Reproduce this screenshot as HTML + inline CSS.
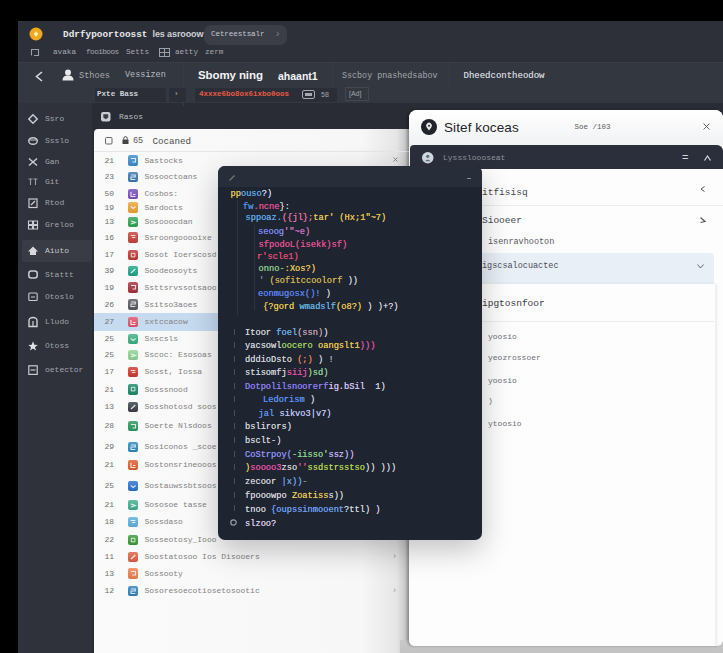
<!DOCTYPE html><html><head><meta charset="utf-8"><style>
*{margin:0;padding:0;box-sizing:border-box}
html,body{width:723px;height:653px;overflow:hidden;background:#000}
body{position:relative;font-family:"Liberation Sans",sans-serif}
.a{position:absolute}
.t{position:absolute;white-space:pre;line-height:1}
.mono{font-family:"Liberation Mono",monospace}
svg{position:absolute;overflow:visible}
</style></head><body>
<div class="a" style="left:18px;top:21px;width:705px;height:632px;background:#2a2d35"></div>
<div class="a" style="left:18px;top:21px;width:705px;height:41px;background:#2d3039"></div>
<div class="a" style="left:18px;top:62px;width:705px;height:41px;background:#33373f"></div>
<div class="a" style="left:18px;top:62px;width:705px;height:1px;background:#393d46"></div>
<div class="a" style="left:18px;top:103px;width:74px;height:550px;background:#2f323b"></div>
<div class="a" style="left:92px;top:103px;width:631px;height:550px;background:#292c34"></div>
<svg style="left:29px;top:27px;" width="14" height="14" viewBox="0 0 14 14"><circle cx="7" cy="7" r="6.5" fill="#f0a81e"/><path d="M7 4.2L9.3 7L7 9.8L4.7 7z" fill="#fff0c8"/></svg>
<div class="t mono" style="left:63px;top:29.5px;font-size:9.4px;color:#e8e9ec;font-weight:bold">Ddrfypoortoosst</div>
<div class="t " style="left:152.5px;top:30px;font-size:9px;color:#d0d2d6;font-weight:bold;letter-spacing:-0.1px">les asrooow</div>
<div class="a" style="left:204px;top:25px;width:83px;height:19.5px;background:#3b3e46;border-radius:7px"></div>
<div class="t mono" style="left:211px;top:30.5px;font-size:7.6px;color:#c5c8ce;letter-spacing:-0.1px">Cetreestsalr</div>
<div class="t " style="left:276px;top:29px;font-size:10px;color:#80848b;">›</div>
<svg style="left:31px;top:49px;" width="8" height="7" viewBox="0 0 8 7"><path d="M0.5 6.5V0.5H7.5V6.5H3" fill="none" stroke="#9aa0a8" stroke-width="1.1"/></svg>
<div class="t mono" style="left:53px;top:49px;font-size:7.7px;color:#a4a8af;">avaka</div>
<div class="t mono" style="left:86px;top:49px;font-size:7.7px;color:#a4a8af;letter-spacing:-0.55px">fooiboos</div>
<div class="t mono" style="left:126px;top:49px;font-size:7.7px;color:#a4a8af;">Setts</div>
<svg style="left:159px;top:48px;" width="11" height="9" viewBox="0 0 11 9"><rect x="0.5" y="0.5" width="10" height="8" fill="none" stroke="#9aa0a8"/><path d="M0.5 4.5h10M5.5 0.5v8" stroke="#9aa0a8"/></svg>
<div class="t mono" style="left:175px;top:49px;font-size:7.7px;color:#a4a8af;">aetty</div>
<div class="t mono" style="left:205px;top:49px;font-size:7.7px;color:#a4a8af;">zerm</div>
<svg style="left:35px;top:71px;" width="8" height="11" viewBox="0 0 8 11"><path d="M7 1L1.5 5.5L7 10" stroke="#d6d8dc" stroke-width="1.6" fill="none"/></svg>
<svg style="left:62px;top:69px;" width="12" height="12" viewBox="0 0 12 12"><circle cx="6" cy="3.5" r="3" fill="#e6e8eb"/><path d="M0.5 11.5c0-4 2.5-5 5.5-5s5.5 1 5.5 5z" fill="#e6e8eb"/></svg>
<div class="t mono" style="left:79px;top:72px;font-size:8.6px;color:#a7abb2;">Sthoes</div>
<div class="t mono" style="left:125px;top:71px;font-size:8.5px;color:#b9bdc3;">Vessizen</div>
<div class="a" style="left:183px;top:62px;width:1px;height:44px;background:#393c44"></div>
<div class="t " style="left:198px;top:70px;font-size:11.5px;color:#f2f3f5;font-weight:bold;letter-spacing:-0.1px">Sbomy ning</div>
<div class="t " style="left:278px;top:71px;font-size:10.5px;color:#f2f3f5;font-weight:bold">ahaant1</div>
<div class="a" style="left:332px;top:62px;width:1px;height:26px;background:#393c44"></div>
<div class="t mono" style="left:342px;top:72px;font-size:8.4px;color:#a3a7ae;">Sscboy pnashedsabov</div>
<div class="a" style="left:449px;top:62px;width:1px;height:26px;background:#393c44"></div>
<div class="t mono" style="left:463.5px;top:71.5px;font-size:9px;color:#c8cbd1;text-shadow:0 0 0.4px #c8cbd1">Dheedcontheodow</div>
<div class="a" style="left:94px;top:87px;width:73px;height:16px;background:#2b2e37;border:1px solid #353840"></div>
<div class="t mono" style="left:97px;top:91px;font-size:7.6px;color:#cfd2d8;font-weight:bold">Pxte Bass</div>
<div class="a" style="left:168px;top:87px;width:19px;height:16px;background:#2b2e37;border:1px solid #353840"></div>
<div class="t " style="left:175px;top:90px;font-size:8px;color:#b0b3b9;">›</div>
<div class="a" style="left:194px;top:87px;width:144px;height:16px;background:#2b2e37;border:1px solid #353840"></div>
<div class="t mono" style="left:199px;top:91px;font-size:7.5px;color:#e85a44;font-weight:bold">4xxxe6bo8ox6ixbo0oos</div>
<svg style="left:302px;top:90px;" width="13" height="9" viewBox="0 0 13 9"><rect x="0.5" y="0.5" width="12" height="8" rx="1.5" fill="none" stroke="#a6aab0"/><rect x="3" y="3" width="7" height="3" fill="#a6aab0"/></svg>
<div class="t " style="left:321px;top:91px;font-size:7px;color:#a0a4aa;">58</div>
<div class="a" style="left:345px;top:87px;width:24px;height:14px;border:1px solid #44474f"></div>
<div class="t " style="left:349px;top:90px;font-size:7px;color:#a0a4aa;">[Ad]</div>
<div class="a" style="left:21.5px;top:240px;width:70px;height:22px;background:#393c44;border-radius:2px"></div>
<svg style="left:28px;top:114px;" width="10" height="10" viewBox="0 0 10 10"><path d="M5 0.8L9.2 5L5 9.2L0.8 5z" fill="none" stroke="#c8cbd0" stroke-width="1.5"/></svg>
<div class="t mono" style="left:45px;top:115px;font-size:8px;color:#a0a4ab;">Ssro</div>
<svg style="left:28px;top:136px;" width="10" height="10" viewBox="0 0 10 10"><ellipse cx="5" cy="5" rx="4.3" ry="3.3" fill="none" stroke="#c8cbd0" stroke-width="1.4"/><path d="M1 4h8" stroke="#c8cbd0"/></svg>
<div class="t mono" style="left:45px;top:137px;font-size:8px;color:#a0a4ab;">Ssslo</div>
<svg style="left:28px;top:157px;" width="10" height="10" viewBox="0 0 10 10"><path d="M1 1.5L9 8.5M9 1.5L1 8.5" stroke="#c8cbd0" stroke-width="1.5"/></svg>
<div class="t mono" style="left:45px;top:158px;font-size:8px;color:#a0a4ab;">Gan</div>
<svg style="left:28px;top:177px;" width="10" height="10" viewBox="0 0 10 10"><path d="M0.5 2h4M2.5 2v6M5.5 2h4M7.5 2v6" stroke="#9a9ea5" stroke-width="1.1"/></svg>
<div class="t mono" style="left:45px;top:178px;font-size:8px;color:#a0a4ab;">Git</div>
<svg style="left:28px;top:198px;" width="10" height="10" viewBox="0 0 10 10"><rect x="1" y="1" width="8" height="8.5" fill="none" stroke="#c8cbd0" stroke-width="1.2"/><path d="M3 7L7 3" stroke="#c8cbd0" stroke-width="1.2"/></svg>
<div class="t mono" style="left:45px;top:199px;font-size:8px;color:#a0a4ab;">Rtod</div>
<svg style="left:28px;top:220px;" width="10" height="10" viewBox="0 0 10 10"><path d="M0.5 1h4v3.5h-4zM5.5 1h4v3.5h-4zM0.5 5.5h4v3.5h-4zM5.5 5.5h4v3.5h-4z" fill="none" stroke="#c8cbd0" stroke-width="1.1"/></svg>
<div class="t mono" style="left:45px;top:221px;font-size:8px;color:#a0a4ab;">Greloo</div>
<svg style="left:28px;top:246px;" width="10" height="10" viewBox="0 0 10 10"><path d="M5 0.5L10 5.5H8V9H2V5.5H0z" fill="#d6d8dc"/></svg>
<div class="t mono" style="left:45px;top:247px;font-size:8px;color:#c3c6cc;">Aiuto</div>
<svg style="left:28px;top:270px;" width="10" height="10" viewBox="0 0 10 10"><rect x="0.8" y="1" width="8.4" height="7" rx="2.5" fill="none" stroke="#c8cbd0" stroke-width="1.5"/></svg>
<div class="t mono" style="left:45px;top:271px;font-size:8px;color:#a0a4ab;">Stattt</div>
<svg style="left:28px;top:292px;" width="10" height="10" viewBox="0 0 10 10"><rect x="0.8" y="1" width="8.4" height="7.5" rx="1" fill="none" stroke="#c8cbd0" stroke-width="1.1"/><path d="M3 5h4" stroke="#c8cbd0"/></svg>
<div class="t mono" style="left:45px;top:293px;font-size:8px;color:#a0a4ab;">Otoslo</div>
<svg style="left:28px;top:317px;" width="10" height="10" viewBox="0 0 10 10"><path d="M1 9.5V3.5a4 3 0 0 1 8 0V9.5z" fill="none" stroke="#d0d2d6" stroke-width="1.4"/><path d="M5 4v5" stroke="#d0d2d6" stroke-width="1.2"/></svg>
<div class="t mono" style="left:45px;top:318px;font-size:8px;color:#a0a4ab;">Lludo</div>
<svg style="left:28px;top:341px;" width="10" height="10" viewBox="0 0 10 10"><path d="M5 0.3L6.3 3.8L9.8 3.9L7 6.1L8 9.6L5 7.6L2 9.6L3 6.1L0.2 3.9L3.7 3.8z" fill="#e0e2e5"/></svg>
<div class="t mono" style="left:45px;top:342px;font-size:8px;color:#a0a4ab;">Otoss</div>
<svg style="left:28px;top:365px;" width="10" height="10" viewBox="0 0 10 10"><rect x="0.8" y="0.8" width="8.4" height="8.6" fill="none" stroke="#c8cbd0" stroke-width="1.2"/><path d="M2.5 5h5" stroke="#c8cbd0" stroke-width="1.2"/></svg>
<div class="t mono" style="left:45px;top:366px;font-size:8px;color:#a0a4ab;">oetector</div>
<svg style="left:101px;top:112px;" width="9.5" height="9.5" viewBox="0 0 9.5 9.5"><rect x="0" y="0" width="9.5" height="9.5" rx="2.2" fill="#c9ccd1"/><path d="M2.3 2.3h4.9v3.2L4.75 7.3L2.3 5.5z" fill="#3a3d45"/></svg>
<div class="t mono" style="left:119px;top:113px;font-size:8px;color:#b8bbc1;">Rasos</div>
<div class="a" style="left:94px;top:129px;width:315px;height:524px;background:linear-gradient(90deg,#fafafa 0%,#f7f7f7 85%,#e6e6e6 96%,#bdbdbd 100%);border-radius:4px 0 0 0;overflow:hidden">
<svg style="left:10.5px;top:7.5px;" width="7.5" height="7.5" viewBox="0 0 7.5 7.5"><rect x="0.5" y="0.5" width="6.5" height="6.5" rx="1" fill="none" stroke="#666" stroke-width="1"/></svg>
<svg style="left:28px;top:7px;" width="7" height="8" viewBox="0 0 7 8"><rect x="0.5" y="3.5" width="6" height="4.5" fill="#444"/><path d="M1.7 3.5V2.5a1.8 1.8 0 0 1 3.6 0V3.5" stroke="#444" fill="none"/></svg>
<div class="t mono" style="left:39px;top:7.5px;font-size:8.5px;color:#555;">65</div>
<div class="t mono" style="left:58.5px;top:7.5px;font-size:9.2px;color:#4a4a4a;">Cocaned</div>
<div class="a" style="left:0px;top:22px;width:315px;height:1px;background:#e6e6e6"></div>
<svg style="left:299px;top:28px;" width="5" height="5" viewBox="0 0 5 5"><path d="M0.5 0.5L4.5 4.5M4.5 0.5L0.5 4.5" stroke="#777" stroke-width="0.9"/></svg>
<div class="t mono" style="left:10.5px;top:27.5px;font-size:8px;color:#707070;">21</div>
<div class="a" style="left:34.19999999999999px;top:26.3px;width:10.3px;height:10.3px;background:linear-gradient(rgba(255,255,255,.18),rgba(0,0,0,.08)),#3d8fd1;border-radius:2px"></div>
<svg style="left:34.19999999999999px;top:26.3px;" width="10.3" height="10.3" viewBox="0 0 10.3 10.3"><path d="M3 3.5h4.5v3.5H4.5" stroke="rgba(255,255,255,.8)" stroke-width="1.1" fill="none"/></svg>
<div class="t mono" style="left:50.5px;top:27.5px;font-size:8px;color:#828282;">Sastocks</div>
<div class="t mono" style="left:10.5px;top:44px;font-size:8px;color:#707070;">23</div>
<div class="a" style="left:34.19999999999999px;top:42.8px;width:10.3px;height:10.3px;background:linear-gradient(rgba(255,255,255,.18),rgba(0,0,0,.08)),#3a78b5;border-radius:2px"></div>
<svg style="left:34.19999999999999px;top:42.8px;" width="10.3" height="10.3" viewBox="0 0 10.3 10.3"><path d="M3 3h4.3v2H3v2.5h4.3" stroke="rgba(255,255,255,.8)" stroke-width="1.1" fill="none"/></svg>
<div class="t mono" style="left:50.5px;top:44px;font-size:8px;color:#828282;">Sosooctoans</div>
<div class="t mono" style="left:10.5px;top:60.7px;font-size:8px;color:#707070;">50</div>
<div class="a" style="left:34.19999999999999px;top:59.5px;width:10.3px;height:10.3px;background:linear-gradient(rgba(255,255,255,.18),rgba(0,0,0,.08)),#7d4fc2;border-radius:2px"></div>
<svg style="left:34.19999999999999px;top:59.5px;" width="10.3" height="10.3" viewBox="0 0 10.3 10.3"><path d="M3 3v4.5h4.5M5 5.5h2.5" stroke="rgba(255,255,255,.85)" stroke-width="1.1" fill="none"/></svg>
<div class="t mono" style="left:50.5px;top:60.7px;font-size:8px;color:#828282;">Cosbos:</div>
<div class="t mono" style="left:10.5px;top:74.6px;font-size:8px;color:#707070;">19</div>
<div class="a" style="left:34.19999999999999px;top:73.4px;width:10.3px;height:10.3px;background:linear-gradient(rgba(255,255,255,.18),rgba(0,0,0,.08)),#f0a535;border-radius:2px"></div>
<svg style="left:34.19999999999999px;top:73.4px;" width="10.3" height="10.3" viewBox="0 0 10.3 10.3"><path d="M2.8 4.5l2.4 2 2.4-2" stroke="rgba(255,255,255,.8)" stroke-width="1.1" fill="none"/></svg>
<div class="t mono" style="left:50.5px;top:74.6px;font-size:8px;color:#828282;">Sardocts</div>
<div class="t mono" style="left:10.5px;top:89.2px;font-size:8px;color:#707070;">13</div>
<div class="a" style="left:34.19999999999999px;top:88.0px;width:10.3px;height:10.3px;background:linear-gradient(rgba(255,255,255,.18),rgba(0,0,0,.08)),#2fa653;border-radius:2px"></div>
<svg style="left:34.19999999999999px;top:88.0px;" width="10.3" height="10.3" viewBox="0 0 10.3 10.3"><path d="M3 4l4.3 1.5L3 7" stroke="rgba(255,255,255,.85)" stroke-width="1.1" fill="none"/></svg>
<div class="t mono" style="left:50.5px;top:89.2px;font-size:8px;color:#828282;">Sosooocdan</div>
<div class="t mono" style="left:10.5px;top:104.5px;font-size:8px;color:#707070;">16</div>
<div class="a" style="left:34.19999999999999px;top:103.3px;width:10.3px;height:10.3px;background:linear-gradient(rgba(255,255,255,.18),rgba(0,0,0,.08)),#c9423b;border-radius:2px"></div>
<svg style="left:34.19999999999999px;top:103.3px;" width="10.3" height="10.3" viewBox="0 0 10.3 10.3"><path d="M2.8 3.5h4.6M4 5.5h3.4" stroke="rgba(255,255,255,.8)" stroke-width="1.1" fill="none"/></svg>
<div class="t mono" style="left:50.5px;top:104.5px;font-size:8px;color:#828282;">Ssroongooooixe</div>
<div class="t mono" style="left:10.5px;top:121.7px;font-size:8px;color:#707070;">17</div>
<div class="a" style="left:34.19999999999999px;top:120.5px;width:10.3px;height:10.3px;background:linear-gradient(rgba(255,255,255,.18),rgba(0,0,0,.08)),#bf3a30;border-radius:2px"></div>
<svg style="left:34.19999999999999px;top:120.5px;" width="10.3" height="10.3" viewBox="0 0 10.3 10.3"><path d="M3.3 3.3h3.6v3.6H3.3z" stroke="rgba(255,255,255,.8)" stroke-width="1" fill="none"/></svg>
<div class="t mono" style="left:50.5px;top:121.7px;font-size:8px;color:#828282;">Sosot Ioerscosd</div>
<div class="t mono" style="left:10.5px;top:137.7px;font-size:8px;color:#707070;">39</div>
<div class="a" style="left:34.19999999999999px;top:136.5px;width:10.3px;height:10.3px;background:linear-gradient(rgba(255,255,255,.18),rgba(0,0,0,.08)),#21a68a;border-radius:2px"></div>
<svg style="left:34.19999999999999px;top:136.5px;" width="10.3" height="10.3" viewBox="0 0 10.3 10.3"><path d="M3 7L7.3 3" stroke="rgba(255,255,255,.85)" stroke-width="1.2" fill="none"/></svg>
<div class="t mono" style="left:50.5px;top:137.7px;font-size:8px;color:#828282;">Soodeosoyts</div>
<div class="t mono" style="left:10.5px;top:154.5px;font-size:8px;color:#707070;">19</div>
<div class="a" style="left:34.19999999999999px;top:153.3px;width:10.3px;height:10.3px;background:linear-gradient(rgba(255,255,255,.18),rgba(0,0,0,.08)),#a8323f;border-radius:2px"></div>
<svg style="left:34.19999999999999px;top:153.3px;" width="10.3" height="10.3" viewBox="0 0 10.3 10.3"><path d="M3 3.5h4.5v3.5H4.5" stroke="rgba(255,255,255,.8)" stroke-width="1.1" fill="none"/></svg>
<div class="t mono" style="left:50.5px;top:154.5px;font-size:8px;color:#828282;">Ssttsrvssotsaoo</div>
<div class="t mono" style="left:10.5px;top:171.6px;font-size:8px;color:#707070;">26</div>
<div class="a" style="left:34.19999999999999px;top:170.4px;width:10.3px;height:10.3px;background:linear-gradient(rgba(255,255,255,.18),rgba(0,0,0,.08)),#575b61;border-radius:2px"></div>
<svg style="left:34.19999999999999px;top:170.4px;" width="10.3" height="10.3" viewBox="0 0 10.3 10.3"><path d="M3 3h4.3v2H3v2.5h4.3" stroke="rgba(255,255,255,.8)" stroke-width="1.1" fill="none"/></svg>
<div class="t mono" style="left:50.5px;top:171.6px;font-size:8px;color:#828282;">Ssitso3aoes</div>
<div class="a" style="left:0px;top:183.5px;width:315px;height:18.5px;background:#c6daf0"></div>
<div class="t mono" style="left:10.5px;top:188.8px;font-size:8px;color:#707070;">27</div>
<div class="a" style="left:34.19999999999999px;top:187.6px;width:10.3px;height:10.3px;background:linear-gradient(rgba(255,255,255,.18),rgba(0,0,0,.08)),#e0566c;border-radius:2px"></div>
<svg style="left:34.19999999999999px;top:187.6px;" width="10.3" height="10.3" viewBox="0 0 10.3 10.3"><path d="M3 3v4.5h4.5M5 5.5h2.5" stroke="rgba(255,255,255,.85)" stroke-width="1.1" fill="none"/></svg>
<div class="t mono" style="left:50.5px;top:188.8px;font-size:8px;color:#828282;">sxtccacow</div>
<div class="t mono" style="left:10.5px;top:206px;font-size:8px;color:#707070;">25</div>
<div class="a" style="left:34.19999999999999px;top:204.8px;width:10.3px;height:10.3px;background:linear-gradient(rgba(255,255,255,.18),rgba(0,0,0,.08)),#3cb283;border-radius:2px"></div>
<svg style="left:34.19999999999999px;top:204.8px;" width="10.3" height="10.3" viewBox="0 0 10.3 10.3"><path d="M2.8 4.5l2.4 2 2.4-2" stroke="rgba(255,255,255,.8)" stroke-width="1.1" fill="none"/></svg>
<div class="t mono" style="left:50.5px;top:206px;font-size:8px;color:#828282;">Sxscsls</div>
<div class="t mono" style="left:10.5px;top:222.4px;font-size:8px;color:#707070;">25</div>
<div class="a" style="left:34.19999999999999px;top:221.2px;width:10.3px;height:10.3px;background:linear-gradient(rgba(255,255,255,.18),rgba(0,0,0,.08)),#8fd596;border-radius:2px"></div>
<svg style="left:34.19999999999999px;top:221.2px;" width="10.3" height="10.3" viewBox="0 0 10.3 10.3"><path d="M3 4l4.3 1.5L3 7" stroke="rgba(255,255,255,.85)" stroke-width="1.1" fill="none"/></svg>
<div class="t mono" style="left:50.5px;top:222.4px;font-size:8px;color:#828282;">Sscoc: Esosoas</div>
<div class="t mono" style="left:10.5px;top:239.4px;font-size:8px;color:#707070;">17</div>
<div class="a" style="left:34.19999999999999px;top:238.2px;width:10.3px;height:10.3px;background:linear-gradient(rgba(255,255,255,.18),rgba(0,0,0,.08)),#d03b31;border-radius:2px"></div>
<svg style="left:34.19999999999999px;top:238.2px;" width="10.3" height="10.3" viewBox="0 0 10.3 10.3"><path d="M2.8 3.5h4.6M4 5.5h3.4" stroke="rgba(255,255,255,.8)" stroke-width="1.1" fill="none"/></svg>
<div class="t mono" style="left:50.5px;top:239.4px;font-size:8px;color:#828282;">Sosst, Iossa</div>
<div class="t mono" style="left:10.5px;top:256.6px;font-size:8px;color:#707070;">21</div>
<div class="a" style="left:34.19999999999999px;top:255.4px;width:10.3px;height:10.3px;background:linear-gradient(rgba(255,255,255,.18),rgba(0,0,0,.08)),#1b8a6b;border-radius:2px"></div>
<svg style="left:34.19999999999999px;top:255.4px;" width="10.3" height="10.3" viewBox="0 0 10.3 10.3"><path d="M3.3 3.3h3.6v3.6H3.3z" stroke="rgba(255,255,255,.8)" stroke-width="1" fill="none"/></svg>
<div class="t mono" style="left:50.5px;top:256.6px;font-size:8px;color:#828282;">Sosssnood</div>
<div class="t mono" style="left:10.5px;top:273.7px;font-size:8px;color:#707070;">13</div>
<div class="a" style="left:34.19999999999999px;top:272.5px;width:10.3px;height:10.3px;background:linear-gradient(rgba(255,255,255,.18),rgba(0,0,0,.08)),#3b4049;border-radius:2px"></div>
<svg style="left:34.19999999999999px;top:272.5px;" width="10.3" height="10.3" viewBox="0 0 10.3 10.3"><path d="M3 7L7.3 3" stroke="rgba(255,255,255,.85)" stroke-width="1.2" fill="none"/></svg>
<div class="t mono" style="left:50.5px;top:273.7px;font-size:8px;color:#828282;">Sosshotosd soos</div>
<div class="t mono" style="left:10.5px;top:293px;font-size:8px;color:#707070;">28</div>
<div class="a" style="left:34.19999999999999px;top:291.8px;width:10.3px;height:10.3px;background:linear-gradient(rgba(255,255,255,.18),rgba(0,0,0,.08)),#2b9a62;border-radius:2px"></div>
<svg style="left:34.19999999999999px;top:291.8px;" width="10.3" height="10.3" viewBox="0 0 10.3 10.3"><path d="M3 3.5h4.5v3.5H4.5" stroke="rgba(255,255,255,.8)" stroke-width="1.1" fill="none"/></svg>
<div class="t mono" style="left:50.5px;top:293px;font-size:8px;color:#828282;">Soerte Nlsdoos</div>
<div class="t mono" style="left:10.5px;top:313.8px;font-size:8px;color:#707070;">29</div>
<div class="a" style="left:34.19999999999999px;top:312.6px;width:10.3px;height:10.3px;background:linear-gradient(rgba(255,255,255,.18),rgba(0,0,0,.08)),#2b89c2;border-radius:2px"></div>
<svg style="left:34.19999999999999px;top:312.6px;" width="10.3" height="10.3" viewBox="0 0 10.3 10.3"><path d="M3 3h4.3v2H3v2.5h4.3" stroke="rgba(255,255,255,.8)" stroke-width="1.1" fill="none"/></svg>
<div class="t mono" style="left:50.5px;top:313.8px;font-size:8px;color:#828282;">Sosiconos _scoe</div>
<div class="t mono" style="left:10.5px;top:332px;font-size:8px;color:#707070;">21</div>
<div class="a" style="left:34.19999999999999px;top:330.8px;width:10.3px;height:10.3px;background:linear-gradient(rgba(255,255,255,.18),rgba(0,0,0,.08)),#e0612f;border-radius:2px"></div>
<svg style="left:34.19999999999999px;top:330.8px;" width="10.3" height="10.3" viewBox="0 0 10.3 10.3"><path d="M3 3v4.5h4.5M5 5.5h2.5" stroke="rgba(255,255,255,.85)" stroke-width="1.1" fill="none"/></svg>
<div class="t mono" style="left:50.5px;top:332px;font-size:8px;color:#828282;">Sostonsrineooos</div>
<div class="t mono" style="left:10.5px;top:353px;font-size:8px;color:#707070;">25</div>
<div class="a" style="left:34.19999999999999px;top:351.8px;width:10.3px;height:10.3px;background:linear-gradient(rgba(255,255,255,.18),rgba(0,0,0,.08)),#2b72d2;border-radius:2px"></div>
<svg style="left:34.19999999999999px;top:351.8px;" width="10.3" height="10.3" viewBox="0 0 10.3 10.3"><path d="M2.8 4.5l2.4 2 2.4-2" stroke="rgba(255,255,255,.8)" stroke-width="1.1" fill="none"/></svg>
<div class="t mono" style="left:50.5px;top:353px;font-size:8px;color:#828282;">Sostauwssbtsoos</div>
<div class="t mono" style="left:10.5px;top:371.7px;font-size:8px;color:#707070;">21</div>
<div class="a" style="left:34.19999999999999px;top:370.5px;width:10.3px;height:10.3px;background:linear-gradient(rgba(255,255,255,.18),rgba(0,0,0,.08)),#41b192;border-radius:2px"></div>
<svg style="left:34.19999999999999px;top:370.5px;" width="10.3" height="10.3" viewBox="0 0 10.3 10.3"><path d="M3 4l4.3 1.5L3 7" stroke="rgba(255,255,255,.85)" stroke-width="1.1" fill="none"/></svg>
<div class="t mono" style="left:50.5px;top:371.7px;font-size:8px;color:#828282;">Sososoe tasse</div>
<div class="t mono" style="left:10.5px;top:389px;font-size:8px;color:#707070;">18</div>
<div class="a" style="left:34.19999999999999px;top:387.8px;width:10.3px;height:10.3px;background:linear-gradient(rgba(255,255,255,.18),rgba(0,0,0,.08)),#5fb1e0;border-radius:2px"></div>
<svg style="left:34.19999999999999px;top:387.8px;" width="10.3" height="10.3" viewBox="0 0 10.3 10.3"><path d="M2.8 3.5h4.6M4 5.5h3.4" stroke="rgba(255,255,255,.8)" stroke-width="1.1" fill="none"/></svg>
<div class="t mono" style="left:50.5px;top:389px;font-size:8px;color:#828282;">Sossdaso</div>
<div class="t mono" style="left:10.5px;top:406.7px;font-size:8px;color:#707070;">22</div>
<div class="a" style="left:34.19999999999999px;top:405.5px;width:10.3px;height:10.3px;background:linear-gradient(rgba(255,255,255,.18),rgba(0,0,0,.08)),#3a9b3b;border-radius:2px"></div>
<svg style="left:34.19999999999999px;top:405.5px;" width="10.3" height="10.3" viewBox="0 0 10.3 10.3"><path d="M3.3 3.3h3.6v3.6H3.3z" stroke="rgba(255,255,255,.8)" stroke-width="1" fill="none"/></svg>
<div class="t mono" style="left:50.5px;top:406.7px;font-size:8px;color:#828282;">Sosseotosy_Iooo</div>
<div class="t mono" style="left:10.5px;top:424px;font-size:8px;color:#707070;">11</div>
<div class="a" style="left:34.19999999999999px;top:422.8px;width:10.3px;height:10.3px;background:linear-gradient(rgba(255,255,255,.18),rgba(0,0,0,.08)),#e06142;border-radius:2px"></div>
<svg style="left:34.19999999999999px;top:422.8px;" width="10.3" height="10.3" viewBox="0 0 10.3 10.3"><path d="M3 7L7.3 3" stroke="rgba(255,255,255,.85)" stroke-width="1.2" fill="none"/></svg>
<div class="t mono" style="left:50.5px;top:424px;font-size:8px;color:#828282;">Soostatosoo Ios Disooers</div>
<div class="t " style="left:299px;top:423px;font-size:9px;color:#999;">›</div>
<div class="t mono" style="left:10.5px;top:440.6px;font-size:8px;color:#707070;">13</div>
<div class="a" style="left:34.19999999999999px;top:439.4px;width:10.3px;height:10.3px;background:linear-gradient(rgba(255,255,255,.18),rgba(0,0,0,.08)),#f08150;border-radius:2px"></div>
<svg style="left:34.19999999999999px;top:439.4px;" width="10.3" height="10.3" viewBox="0 0 10.3 10.3"><path d="M3 3.5h4.5v3.5H4.5" stroke="rgba(255,255,255,.8)" stroke-width="1.1" fill="none"/></svg>
<div class="t mono" style="left:50.5px;top:440.6px;font-size:8px;color:#828282;">Sossooty</div>
<div class="t mono" style="left:10.5px;top:458.4px;font-size:8px;color:#707070;">12</div>
<div class="a" style="left:34.19999999999999px;top:457.2px;width:10.3px;height:10.3px;background:linear-gradient(rgba(255,255,255,.18),rgba(0,0,0,.08)),#3182c1;border-radius:2px"></div>
<svg style="left:34.19999999999999px;top:457.2px;" width="10.3" height="10.3" viewBox="0 0 10.3 10.3"><path d="M3 3h4.3v2H3v2.5h4.3" stroke="rgba(255,255,255,.8)" stroke-width="1.1" fill="none"/></svg>
<div class="t mono" style="left:50.5px;top:458.4px;font-size:8px;color:#828282;">Sosoresoecotiosetosootic</div>
<div class="t " style="left:299px;top:457.4px;font-size:9px;color:#999;">›</div>
</div>
<div class="a" style="left:400px;top:640px;width:323px;height:13px;background:linear-gradient(#cacaca,#c2c2c2)"></div>
<div class="a" style="left:409px;top:110px;width:314px;height:536px;background:#fdfdfd;border-radius:8px 8px 6px 6px;box-shadow:-2px 0 3px rgba(0,0,0,.28);overflow:hidden">
<div class="a" style="left:0px;top:0px;width:314px;height:35px;background:linear-gradient(#ffffff,#f1f2f4)"></div>
<svg style="left:12px;top:9px;" width="16" height="16" viewBox="0 0 16 16"><circle cx="8" cy="8" r="8" fill="#202329"/><path d="M8 11.5L5.6 8.2a2.9 2.9 0 1 1 4.8 0z" fill="#e8e8e8"/><circle cx="8" cy="6.7" r="1" fill="#202329"/></svg>
<div class="t " style="left:35px;top:10.5px;font-size:13.5px;color:#22252b;letter-spacing:0.1px">Sitef koceas</div>
<div class="t mono" style="left:165.5px;top:13.5px;font-size:7.5px;color:#5a5a5a;">Soe /103</div>
<svg style="left:293.5px;top:13px;" width="7" height="7" viewBox="0 0 7 7"><path d="M0.5 0.5L6.5 6.5M6.5 0.5L0.5 6.5" stroke="#555" stroke-width="0.9"/></svg>
<div class="a" style="left:1px;top:35px;width:313px;height:24px;background:#2b2f3b;border-radius:4px 6px 0 0"></div>
<svg style="left:12.5px;top:42px;" width="11.5" height="11.5" viewBox="0 0 11.5 11.5"><circle cx="5.75" cy="5.75" r="5.75" fill="#d5dce2"/><circle cx="5.75" cy="4.3" r="1.6" fill="#5d7080"/><path d="M3.3 9.2c0.5-2 4.4-2 4.9 0z" fill="#5d7080"/></svg>
<div class="t mono" style="left:34px;top:44px;font-size:8px;color:#8d939c;">Lysssloooseat</div>
<div class="t " style="left:273px;top:42px;font-size:11px;color:#d0d4da;">=</div>
<svg style="left:294.5px;top:44.5px;" width="7" height="6" viewBox="0 0 7 6"><path d="M0.5 5.5L3.5 1L6.5 5.5" stroke="#d8dbe0" stroke-width="1.2" fill="none"/></svg>
<div class="t mono" style="left:73px;top:78px;font-size:9.5px;color:#44474e;">itfisisq</div>
<svg style="left:291px;top:76px;" width="5" height="6" viewBox="0 0 5 6"><path d="M4.5 0.5L1 3L4.5 5.5" stroke="#555" stroke-width="1" fill="none"/></svg>
<div class="a" style="left:0px;top:95px;width:314px;height:1px;background:#ececec"></div>
<div class="t mono" style="left:73px;top:106px;font-size:9.5px;color:#44474e;">Siooeer</div>
<svg style="left:291px;top:107px;" width="6" height="6" viewBox="0 0 6 6"><path d="M0.5 0.5L5 4.5L0.5 5.5" stroke="#555" stroke-width="1.2" fill="none"/></svg>
<div class="t mono" style="left:79px;top:128px;font-size:8.5px;color:#55585f;">isenravhooton</div>
<div class="a" style="left:0px;top:143px;width:305px;height:31px;background:#e9eff7;border-radius:0 4px 0 0"></div>
<div class="t mono" style="left:73px;top:152px;font-size:8.5px;color:#4a4d54;">igscsalocuactec</div>
<svg style="left:288px;top:154px;" width="7" height="5" viewBox="0 0 7 5"><path d="M0.5 0.5L3.5 4L6.5 0.5" stroke="#666" stroke-width="1" fill="none"/></svg>
<div class="a" style="left:0px;top:174px;width:306px;height:452px;background:#fdfdfd;box-shadow:2px 0 3px rgba(0,0,0,.07)"></div>
<div class="t mono" style="left:73px;top:189px;font-size:9.5px;color:#383b42;">ipgtosnfoor</div>
<div class="a" style="left:0px;top:211px;width:305px;height:1px;background:#ececec"></div>
<div class="t mono" style="left:79px;top:223px;font-size:8px;color:#6c7078;">yoosio</div>
<div class="t mono" style="left:79px;top:244px;font-size:8px;color:#6c7078;">yeozrossoer</div>
<div class="t mono" style="left:79px;top:267px;font-size:8px;color:#6c7078;">yoosio</div>
<div class="t mono" style="left:79px;top:287px;font-size:8px;color:#6c7078;">)</div>
<div class="t mono" style="left:79px;top:310px;font-size:8px;color:#6c7078;">ytoosio</div>
</div>
<div class="a" style="left:218px;top:166px;width:263.5px;height:373.5px;background:#1f2431;border-radius:7px;overflow:hidden;box-shadow:0 10px 30px rgba(0,0,0,.24)">
<div class="a" style="left:0px;top:0px;width:264px;height:20.5px;background:#282d3a"></div>
<svg style="left:11px;top:9px;" width="6" height="6" viewBox="0 0 6 6"><path d="M0.5 5.5L5.5 0.5" stroke="#777" stroke-width="1.2"/></svg>
<div class="a" style="left:249px;top:12px;width:4px;height:1px;background:#888"></div>
<div class="t mono" style="left:12.5px;top:24.1px;font-size:8.7px;text-shadow:0 0 0.5px currentColor"><span style="color:#e6c452">pp</span><span style="color:#5aa8e0">ouso</span><span style="color:#c8d8f0">?)</span></div>
<div class="t mono" style="left:25px;top:36.7px;font-size:8.7px;text-shadow:0 0 0.5px currentColor"><span style="color:#4d8fe6">fw</span><span style="color:#e0508f">.ncne</span><span style="color:#cdd1d8">}:</span></div>
<div class="t mono" style="left:27.5px;top:48.4px;font-size:8.7px;text-shadow:0 0 0.5px currentColor"><span style="color:#5fa4e8">sppoaz.</span><span style="color:#e070a0">({jl};</span><span style="color:#e6c452">tar&#x27; </span><span style="color:#e6c452">(Hx;1&quot;~7)</span></div>
<div class="t mono" style="left:40px;top:61.6px;font-size:8.7px;text-shadow:0 0 0.5px currentColor"><span style="color:#7d86f2">seoog</span><span style="color:#d070c0">&#x27;&quot;~e)</span></div>
<div class="t mono" style="left:40.60000000000002px;top:74.5px;font-size:8.7px;text-shadow:0 0 0.5px currentColor"><span style="color:#e0508f">sfpodoL(isekk)sf)</span></div>
<div class="t mono" style="left:39px;top:87.0px;font-size:8.7px;text-shadow:0 0 0.5px currentColor"><span style="color:#e04a70">r&#x27;scle1)</span></div>
<div class="t mono" style="left:40.60000000000002px;top:99.4px;font-size:8.7px;text-shadow:0 0 0.5px currentColor"><span style="color:#8cc88a">onno-</span><span style="color:#e6c452">:Xos?)</span></div>
<div class="t mono" style="left:41px;top:111.4px;font-size:8.7px;text-shadow:0 0 0.5px currentColor"><span style="color:#888">&#x27; </span><span style="color:#c8b050">(sofitccoolorf</span><span style="color:#cdd1d8"> ))</span></div>
<div class="t mono" style="left:40px;top:123.8px;font-size:8.7px;text-shadow:0 0 0.5px currentColor"><span style="color:#5a82f0">eonmugosx()!</span><span style="color:#cdd1d8"> )</span></div>
<div class="t mono" style="left:45px;top:136.8px;font-size:8.7px;text-shadow:0 0 0.5px currentColor"><span style="color:#e6c452">{?gord </span><span style="color:#62b0e0">wmadslf</span><span style="color:#e6c452">(o8?)</span><span style="color:#cdd1d8"> ) )+?)</span></div>
<div class="t mono" style="left:27px;top:163.0px;font-size:8.7px;text-shadow:0 0 0.5px currentColor"><span style="color:#cdd1d8">Itoor </span><span style="color:#6ab0e8">foel</span><span style="color:#c0a0b0">(ssn)</span><span style="color:#cdd1d8">)</span></div>
<div class="t mono" style="left:27px;top:176.4px;font-size:8.7px;text-shadow:0 0 0.5px currentColor"><span style="color:#cdd1d8">yacsowl</span><span style="color:#9ad060">oocero</span><span style="color:#e6c452"> oangslt1</span><span style="color:#e050a0">)))</span></div>
<div class="t mono" style="left:27px;top:189.6px;font-size:8.7px;text-shadow:0 0 0.5px currentColor"><span style="color:#cdd1d8">dddioDsto </span><span style="color:#e08050">(;)</span><span style="color:#cdd1d8"> )</span><span style="color:#b0b0b0"> !</span></div>
<div class="t mono" style="left:27px;top:202.8px;font-size:8.7px;text-shadow:0 0 0.5px currentColor"><span style="color:#cdd1d8">stisomfj</span><span style="color:#e050a0">siij</span><span style="color:#8cd090">)sd)</span></div>
<div class="t mono" style="left:27px;top:217.0px;font-size:8.7px;text-shadow:0 0 0.5px currentColor"><span style="color:#8a7ef0">Dotpolilsnoorerf</span><span style="color:#d0c0f0">ig.bSil</span><span style="color:#cdd1d8">  1)</span></div>
<div class="t mono" style="left:45px;top:230.2px;font-size:8.7px;text-shadow:0 0 0.5px currentColor"><span style="color:#5a90f0">Ledorism</span><span style="color:#cdd1d8"> )</span></div>
<div class="t mono" style="left:40.60000000000002px;top:243.7px;font-size:8.7px;text-shadow:0 0 0.5px currentColor"><span style="color:#5a90f0">jal </span><span style="color:#b8c0f0">sikvo3|v7)</span></div>
<div class="t mono" style="left:27px;top:256.9px;font-size:8.7px;text-shadow:0 0 0.5px currentColor"><span style="color:#cdd1d8">bslirors)</span></div>
<div class="t mono" style="left:27px;top:271.0px;font-size:8.7px;text-shadow:0 0 0.5px currentColor"><span style="color:#cdd1d8">bsclt-)</span></div>
<div class="t mono" style="left:27px;top:284.7px;font-size:8.7px;text-shadow:0 0 0.5px currentColor"><span style="color:#8a8ef0">CoStrpoy(</span><span style="color:#8cd090">-iisso&#x27;</span><span style="color:#c0b0f0">ssz))</span></div>
<div class="t mono" style="left:27px;top:298.4px;font-size:8.7px;text-shadow:0 0 0.5px currentColor"><span style="color:#e6c452">)</span><span style="color:#e050a0">soooo3</span><span style="color:#cdd1d8">zso</span><span style="color:#e050a0">&#x27;&#x27;</span><span style="color:#b0d050">ssdstrsstso</span><span style="color:#cdd1d8">))</span><span style="color:#cdd1d8"> )))</span></div>
<div class="t mono" style="left:27px;top:312.1px;font-size:8.7px;text-shadow:0 0 0.5px currentColor"><span style="color:#cdd1d8">zecoor </span><span style="color:#70a0e8">|x))</span><span style="color:#909090">-</span></div>
<div class="t mono" style="left:27px;top:325.8px;font-size:8.7px;text-shadow:0 0 0.5px currentColor"><span style="color:#cdd1d8">fpooowpo </span><span style="color:#e6c452">Zoatiss</span><span style="color:#cdd1d8">s))</span></div>
<div class="t mono" style="left:27px;top:339.5px;font-size:8.7px;text-shadow:0 0 0.5px currentColor"><span style="color:#cdd1d8">tnoo </span><span style="color:#6a9ef0">{oupssinmooent</span><span style="color:#cdd1d8">?ttl) )</span></div>
<div class="t mono" style="left:27px;top:353.7px;font-size:8.7px;text-shadow:0 0 0.5px currentColor"><span style="color:#d8c8e8">slzoo?</span></div>
<div class="a" style="left:16px;top:162.9px;width:1px;height:6px;background:#4a4f58"></div>
<div class="a" style="left:16px;top:176.3px;width:1px;height:6px;background:#4a4f58"></div>
<div class="a" style="left:16px;top:189.5px;width:1px;height:6px;background:#4a4f58"></div>
<div class="a" style="left:16px;top:202.7px;width:1px;height:6px;background:#4a4f58"></div>
<div class="a" style="left:16px;top:216.9px;width:1px;height:6px;background:#4a4f58"></div>
<div class="a" style="left:16px;top:230.1px;width:1px;height:6px;background:#4a4f58"></div>
<div class="a" style="left:16px;top:243.6px;width:1px;height:6px;background:#4a4f58"></div>
<div class="a" style="left:16px;top:256.8px;width:1px;height:6px;background:#4a4f58"></div>
<div class="a" style="left:16px;top:270.9px;width:1px;height:6px;background:#4a4f58"></div>
<div class="a" style="left:16px;top:284.6px;width:1px;height:6px;background:#4a4f58"></div>
<div class="a" style="left:16px;top:298.3px;width:1px;height:6px;background:#4a4f58"></div>
<div class="a" style="left:16px;top:312px;width:1px;height:6px;background:#4a4f58"></div>
<div class="a" style="left:16px;top:325.7px;width:1px;height:6px;background:#4a4f58"></div>
<div class="a" style="left:16px;top:339.4px;width:1px;height:6px;background:#4a4f58"></div>
<svg style="left:12px;top:353px;" width="7" height="7" viewBox="0 0 7 7"><circle cx="3.5" cy="3.5" r="2.7" fill="none" stroke="#9a9ea5" stroke-width="1.2"/></svg>
<div class="a" style="left:19px;top:34px;width:1px;height:115px;background:#2f343d"></div>
<div class="a" style="left:36px;top:59px;width:1px;height:85px;background:#2f343d"></div>
</div>
</body></html>
